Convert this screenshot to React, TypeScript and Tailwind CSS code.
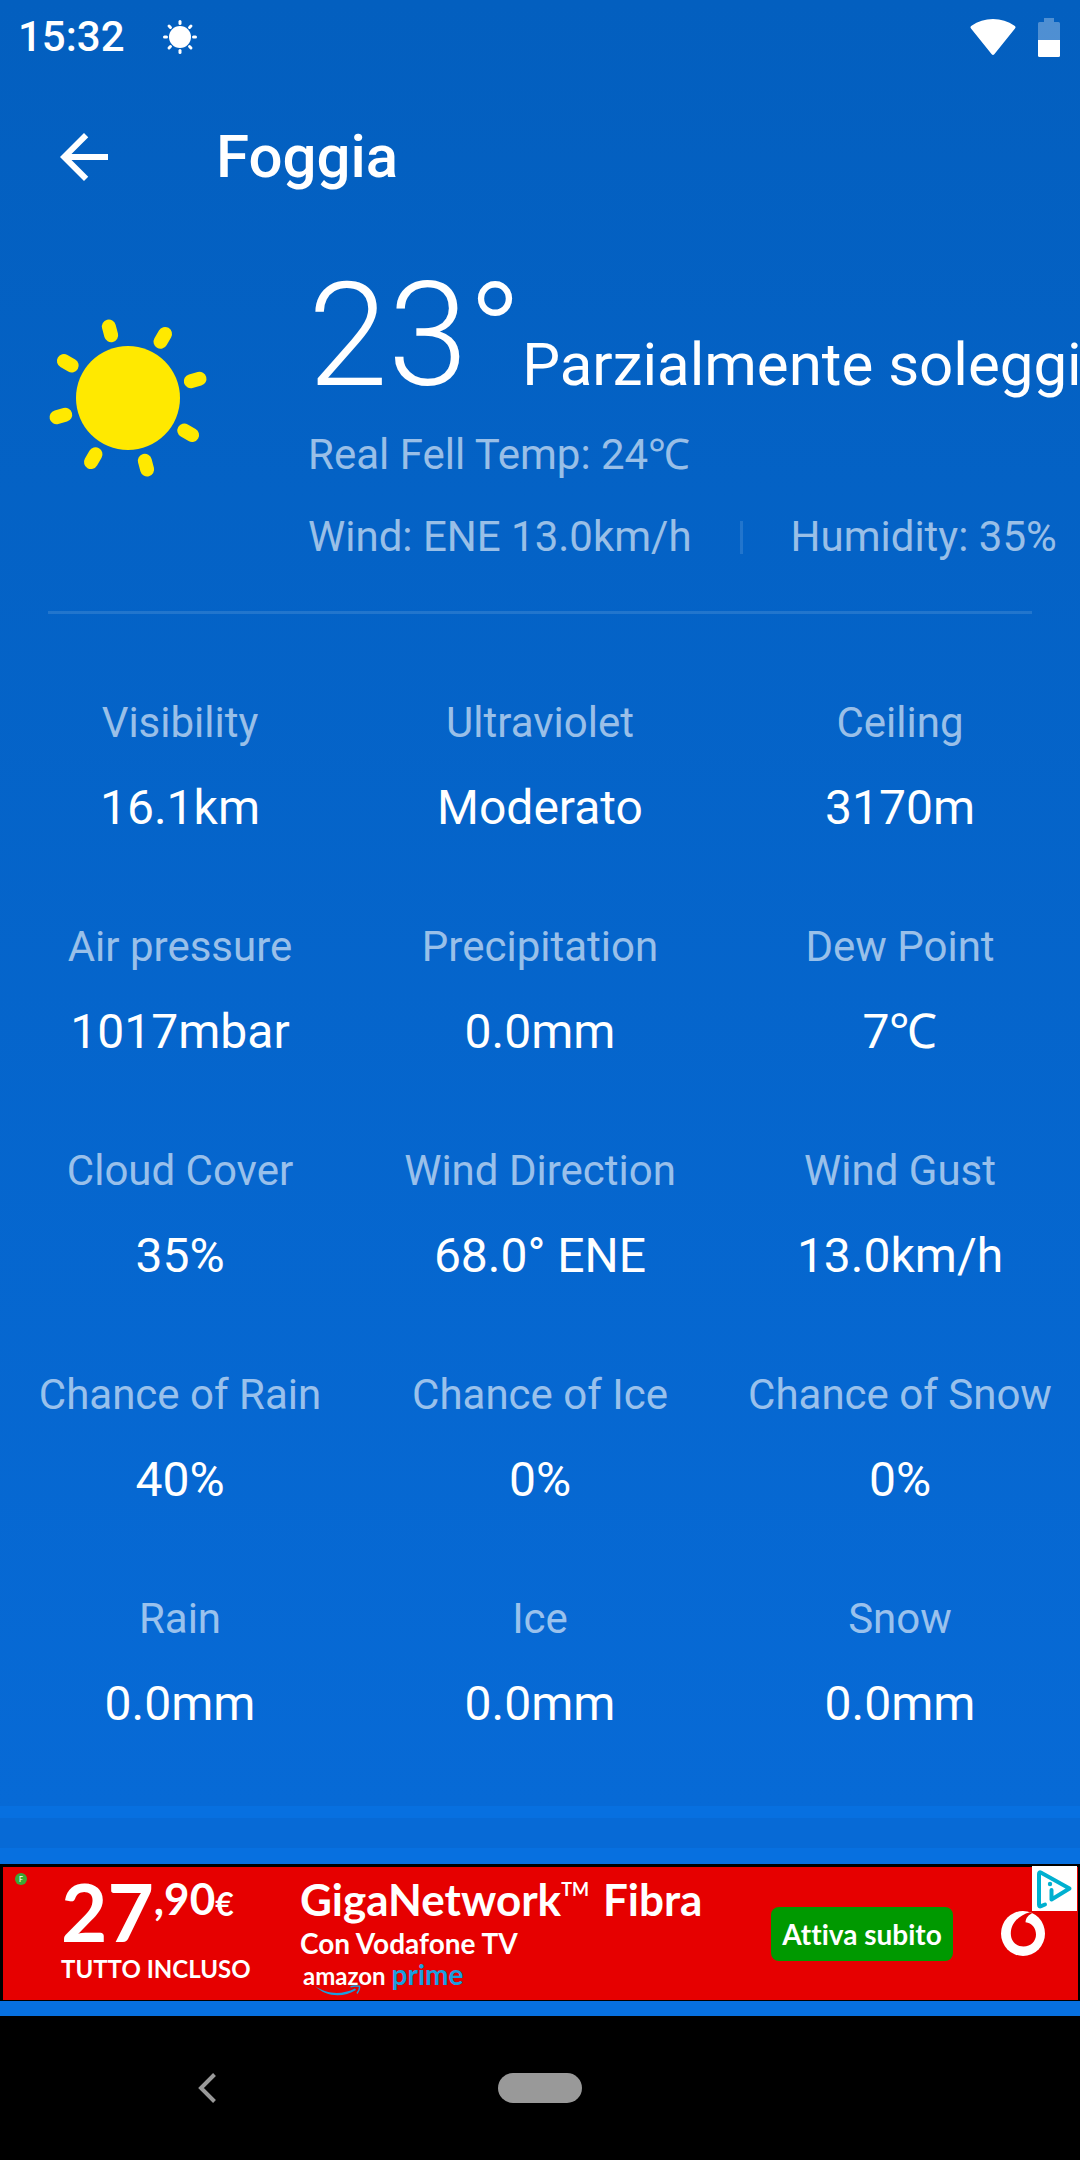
const DETAILS: { label: string; value: string }[] = [
  { label: 'Visibility', value: '16.1km' },
  { label: 'Ultraviolet', value: 'Moderato' },
  { label: 'Ceiling', value: '3170m' },
  { label: 'Air pressure', value: '1017mbar' },
  { label: 'Precipitation', value: '0.0mm' },
  { label: 'Dew Point', value: '7℃' },
  { label: 'Cloud Cover', value: '35%' },
  { label: 'Wind Direction', value: '68.0° ENE' },
  { label: 'Wind Gust', value: '13.0km/h' },
  { label: 'Chance of Rain', value: '40%' },
  { label: 'Chance of Ice', value: '0%' },
  { label: 'Chance of Snow', value: '0%' },
  { label: 'Rain', value: '0.0mm' },
  { label: 'Ice', value: '0.0mm' },
  { label: 'Snow', value: '0.0mm' },
];

const RAYS = [0, 45, 90, 135, 180, 225, 270, 315];

function SunIcon() {
  return (
    <svg viewBox="-80 -79 158 158" className="size-[158px] shrink-0 overflow-visible" fill="#ffe900" aria-hidden="true">
      <circle r="52" />
      {RAYS.map((angle) => (
        <rect key={angle} x="-7" y="-81" width="14" height="23" rx="7" transform={`rotate(${angle - 15})`} />
      ))}
    </svg>
  );
}

function StatusSunIcon() {
  return (
    <svg viewBox="-17 -17 34 34" className="size-[34px]" fill="#fff" aria-hidden="true">
      <circle r="11" />
      {RAYS.map((angle) => (
        <rect key={angle} x="-1.5" y="-17" width="3" height="5" rx="1.5" transform={`rotate(${angle})`} />
      ))}
    </svg>
  );
}

function StatusBar() {
  return (
    <div className="flex h-[74px] items-center justify-between pr-5 pl-[18px]">
      <div className="flex items-center gap-[38px]">
        <span className="text-[42px] leading-[56px] font-medium">15:32</span>
        <StatusSunIcon />
      </div>
      <div className="flex items-center gap-[22px]">
        <svg viewBox="0 0 46 36" className="h-9 w-[46px]" fill="#fff" aria-hidden="true">
          <path d="M1 9.500Q-.3 8 1.500 6.800C8 2.300 15 0 23 0s15 2.300 21.500 6.800Q46.300 8 45 9.500L24.300 35.200q-1.300 1.600-2.600 0z" />
        </svg>
        <svg viewBox="0 0 22 39" className="h-[39px] w-[22px]" fill="#fff" aria-hidden="true">
          <path opacity=".3" d="M6 0h10v4h4.500A1.500 1.500 0 0 1 22 5.500V22H0V5.500A1.500 1.500 0 0 1 1.500 4H6z" />
          <path d="M0 22h22v15.500a1.500 1.500 0 0 1-1.500 1.500h-19A1.500 1.500 0 0 1 0 37.500z" />
        </svg>
      </div>
    </div>
  );
}

function Header() {
  return (
    <header className="flex h-[166px] items-center gap-24 px-12">
      <button type="button" aria-label="Back">
        <svg viewBox="0 0 24 24" className="size-[72px]" fill="#fff" aria-hidden="true">
          <path d="M20 11H7.830l5.590-5.590L12 4l-8 8 8 8 1.410-1.410L7.830 13H20v-2z" />
        </svg>
      </button>
      <h1 className="text-[60px] leading-[72px] font-medium">Foggia</h1>
    </header>
  );
}

function CurrentWeather() {
  return (
    <section className="mx-12 flex items-start gap-[102px] border-b-[3px] border-white/12 pt-[18px] pb-[33px]">
      <div className="pt-[61px]">
        <SunIcon />
      </div>
      <div className="w-0 grow whitespace-nowrap">
        <p className="flex items-baseline">
          <span className="text-[144px] leading-[156px] font-light">23°</span>
          <span className="text-[60px] leading-[72px]">Parzialmente soleggiato</span>
        </p>
        <div className="text-[42px] leading-[82px] text-white/60">
          <p>Real Fell Temp: 24℃</p>
          <div className="flex items-center">
            <p>Wind: ENE 13.0km/h</p>
            <span className="mx-12 h-[33px] w-[3px] shrink-0 bg-white/12" />
            <p>Humidity: 35%</p>
          </div>
        </div>
      </div>
    </section>
  );
}

function Details() {
  return (
    <dl className="grid grid-cols-3 gap-y-[78px] pt-[81px] pb-[69px] text-center whitespace-nowrap">
      {DETAILS.map(({ label, value }) => (
        <div key={label} className="flex flex-col gap-6">
          <dt className="text-[42px] leading-[56px] text-white/60">{label}</dt>
          <dd className="text-[48px] leading-[66px]">{value}</dd>
        </div>
      ))}
    </dl>
  );
}

function AdBanner() {
  return (
    <aside
      aria-label="Advertisement"
      className="relative flex h-[137px] border-t-[3px] border-r-2 border-b border-l-[3px] border-black bg-[#e60000] pl-[58px] font-[Lato,sans-serif] font-bold whitespace-nowrap [font-variant-ligatures:none]"
    >
      <div className="w-[239px] pt-[6px]">
        <div className="flex items-start">
          <span className="text-[80px] leading-[76px]">27</span>
          <span className="text-[44px] leading-[50px]">,90</span>
          <span className="text-[32px] leading-[62px]">€</span>
        </div>
        <p className="text-[24px] leading-[40px]">TUTTO INCLUSO</p>
      </div>
      <div className="pt-[6px]">
        <p className="flex items-start text-[44px] leading-[52px]">
          GigaNetwork<span className="text-[18px] leading-[32px]">TM</span>
          <span className="pl-[14px]">Fibra</span>
        </p>
        <p className="text-[28px] leading-[36px]">Con Vodafone TV</p>
        <p className="flex items-baseline gap-[6px] pl-[3px] leading-[26px]">
          <span className="relative text-[24px]">
            amazon
            <svg viewBox="0 0 46 11" className="absolute top-[22px] left-[12px] h-[11px] w-[46px]" aria-hidden="true">
              <path d="M0 1C12 9.500 27 10 40 3.500L41 5C28 13 11 12 0 1z" fill="#1a9fe0" />
              <path d="M35.500 1.800C39 .5 42 .8 44.500 1.300 45 3.800 43.500 6.500 42 8.500" fill="none" stroke="#1a9fe0" strokeWidth="1.500" />
            </svg>
          </span>
          <span className="text-[28px] text-[#1a9fe0]">prime</span>
        </p>
      </div>
      <div className="flex grow items-center justify-end gap-12 pr-[33px]">
        <button
          type="button"
          className="h-[54px] w-[182px] rounded-lg bg-[#009900] text-center text-[28px] leading-[54px]"
        >
          Attiva subito
        </button>
        <svg viewBox="0 0 44 45" className="h-[45px] w-11" aria-hidden="true">
          <ellipse cx="22" cy="22.500" rx="22" ry="22.500" fill="#fff" />
          <path d="M29 1.200C18 4 9.800 12 9.800 22.500 9.800 30 15 35.500 22.500 35.500 30 35.500 35 30 35 23.500 35 17 31 12 24.500 11.200 24.500 7 28 3.500 31 2.500z" fill="#e60000" />
        </svg>
      </div>
      <span className="absolute top-[6px] left-[12px] flex size-3 items-center justify-center rounded-full bg-[#3aaa35] text-[7px] leading-none font-medium">
        F
      </span>
      <a href="#ad-choices" aria-label="AdChoices" className="absolute top-[-1px] right-px size-[45px] bg-white">
        <svg viewBox="0 0 45 45" className="size-[45px]" fill="none" stroke="#00b0d0" strokeLinecap="round" strokeLinejoin="round" aria-hidden="true">
          <path d="M13 38.500L9 40.200Q7 41 7 38.500V8Q7 5.500 9.200 6.700L37.500 22.500 19.500 33.500V24" strokeWidth="4" />
          <circle cx="18" cy="18" r="2.200" fill="#00b0d0" stroke="none" />
        </svg>
      </a>
    </aside>
  );
}

function NavigationBar() {
  return (
    <nav className="grid h-36 grid-cols-[1fr_84px_1fr] items-center bg-black">
      <button type="button" aria-label="Back" className="ml-[198px] justify-self-start">
        <svg viewBox="0 0 18 30" className="h-[30px] w-[18px]" fill="none" stroke="#999" strokeWidth="4" aria-hidden="true">
          <path d="M16.500 1.500L3 15l13.500 13.500" />
        </svg>
      </button>
      <button type="button" aria-label="Home" className="h-[30px] rounded-full bg-[#999]" />
    </nav>
  );
}

export default function App() {
  return (
    <div className="overflow-x-hidden bg-[#0770e0] font-[Roboto,sans-serif] text-white">
      <main className="bg-linear-to-b from-[#035fbf] to-[#076ad6]">
        <StatusBar />
        <Header />
        <CurrentWeather />
        <Details />
      </main>
      <div className="mt-3 mb-4 h-[30px] bg-[#076ad6]" />
      <AdBanner />
      <div className="h-[15px]" />
      <NavigationBar />
    </div>
  );
}
